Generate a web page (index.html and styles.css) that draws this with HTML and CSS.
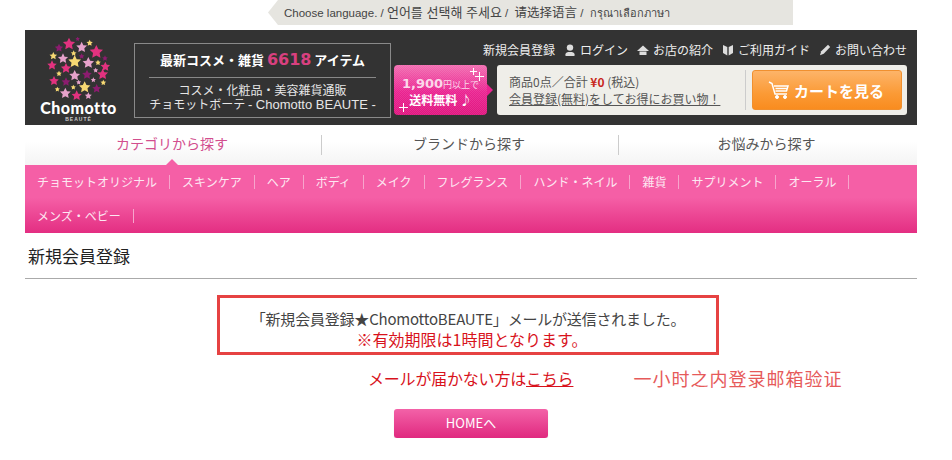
FILE: index.html
```html
<!DOCTYPE html>
<html lang="ja">
<head>
    <meta charset="UTF-8">
    <meta name="viewport" content="width=device-width, initial-scale=1.0">
    <title>新規会員登録 | Chomotto BEAUTE</title>
    <link rel="stylesheet" href="styles.css">
</head>
<body>
    <svg class="defs" width="0" height="0">
        <symbol id="star" viewBox="-10 -10 20 20" overflow="visible">
            <polygon points="0,-10 3,-3.800 9.500,-3.100 4.700,1.500 5.900,8.100 0,5 -5.900,8.100 -4.700,1.500 -9.500,-3.100 -3,-3.800"/>
        </symbol>
    </svg>

    <div class="lang-bar">
        <p class="lang-text">Choose language. / <span class="lang-ko" lang="ko">언어를 선택해 주세요</span> / <span class="lang-sc" lang="zh-CN">请选择语言</span> / <span class="lang-th" lang="th">กรุณาเลือกภาษา</span></p>
    </div>

    <div class="page">
        <header class="header">
            <a class="logo" href="#">
                <svg class="logo-stars" viewBox="0 0 300 210" width="100" height="70">
                    <g class="star-dark">
                        <use href="#star" x="74" y="41" width="26" height="26"/>
                        <use href="#star" x="146" y="70" width="18" height="18"/>
                        <use href="#star" x="216" y="76" width="18" height="18"/>
                        <use href="#star" x="156" y="119" width="30" height="30"/>
                        <use href="#star" x="94" y="142" width="28" height="28"/>
                        <use href="#star" x="186" y="162" width="28" height="28"/>
                        <use href="#star" x="136" y="20" width="14" height="14"/>
                    </g>
                    <g class="star-pink">
                        <use href="#star" x="98" y="23" width="38" height="38"/>
                        <use href="#star" x="178" y="45" width="42" height="42"/>
                        <use href="#star" x="211" y="95" width="30" height="30"/>
                        <use href="#star" x="51" y="91" width="30" height="30"/>
                        <use href="#star" x="92" y="99" width="32" height="32"/>
                        <use href="#star" x="201" y="116" width="34" height="34"/>
                        <use href="#star" x="57" y="138" width="30" height="30"/>
                        <use href="#star" x="124" y="181" width="32" height="32"/>
                    </g>
                    <g class="star-light">
                        <use href="#star" x="138" y="35" width="34" height="34"/>
                        <use href="#star" x="83" y="70" width="32" height="32"/>
                        <use href="#star" x="157" y="81" width="36" height="36"/>
                        <use href="#star" x="117" y="120" width="34" height="34"/>
                        <use href="#star" x="189" y="113" width="16" height="16"/>
                        <use href="#star" x="138" y="149" width="16" height="16"/>
                        <use href="#star" x="182" y="142" width="16" height="16"/>
                        <use href="#star" x="89" y="173" width="34" height="34"/>
                        <use href="#star" x="164" y="187" width="22" height="22"/>
                    </g>
                    <g class="star-yellow">
                        <use href="#star" x="169" y="29" width="20" height="20"/>
                        <use href="#star" x="58" y="66" width="24" height="24"/>
                        <use href="#star" x="122" y="61" width="18" height="18"/>
                        <use href="#star" x="114" y="75" width="40" height="40"/>
                        <use href="#star" x="195" y="89" width="18" height="18"/>
                        <use href="#star" x="78" y="122" width="18" height="18"/>
                        <use href="#star" x="211" y="149" width="18" height="18"/>
                        <use href="#star" x="146" y="154" width="36" height="36"/>
                        <use href="#star" x="122" y="164" width="16" height="16"/>
                        <use href="#star" x="74" y="170" width="16" height="16"/>
                    </g>
                </svg>
                <span class="logo-name">Chomotto</span>
                <span class="logo-sub">BEAUTÉ</span>
            </a>

            <div class="catch">
                <p class="catch-top">最新コスメ・雑貨 <strong class="catch-num">6618</strong> アイテム</p>
                <p class="catch-sub">コスメ・化粧品・美容雑貨通販</p>
                <p class="catch-sub">チョモットボーテ <span class="catch-en">- Chomotto BEAUTE -</span></p>
            </div>

            <div class="free-badge">
                <span class="spark spark-a"></span>
                <span class="spark spark-b"></span>
                <span class="spark spark-c"></span>
                <p class="free-price"><b>1,900</b>円以上で</p>
                <p class="free-label">送料無料 ♪</p>
            </div>

            <div class="header-right">
                <nav class="user-links">
                    <a href="#">新規会員登録</a>
                    <a href="#">
                        <svg class="link-icon" viewBox="0 0 12 12"><circle cx="6" cy="3.600" r="3.200"/><path d="M1.500 12V10.200C1.500 8.600 3.400 8 6 8s4.500.6 4.500 2.200V12z"/></svg>
                        ログイン
                    </a>
                    <a href="#">
                        <svg class="link-icon" viewBox="0 0 12 12"><path d="M6 1.500L12 7H0z"/><path d="M2.500 7.500h7V11h-7z"/></svg>
                        お店の紹介
                    </a>
                    <a href="#">
                        <svg class="link-icon" viewBox="0 0 12 12"><path d="M1 1l4.300 2v8.500L1 9z"/><path d="M11 1L6.700 3v8.500L11 9z"/></svg>
                        ご利用ガイド
                    </a>
                    <a href="#">
                        <svg class="link-icon" viewBox="0 0 12 12"><path d="M9 .8l2.200 2.200-6.500 6.700L1 11.300l1.200-4z"/></svg>
                        お問い合わせ
                    </a>
                </nav>
                <div class="cart-panel">
                    <div class="cart-info">
                        <p>商品0点／合計 <b class="cart-total">¥0</b> (税込)</p>
                        <a href="#">会員登録(無料)をしてお得にお買い物！</a>
                    </div>
                    <a class="cart-btn" href="#">
                        <svg class="cart-icon" viewBox="0 0 22 18"><path d="M1 1l3 1.500 3 10.500h12M6 5h14l-1.500 5H7.500M7.500 7.500h11.500" fill="none" stroke-width="1.500"/><circle cx="9" cy="16" r="1.500"/><circle cx="17" cy="16" r="1.500"/></svg>
                        カートを見る
                    </a>
                </div>
            </div>
        </header>

        <div class="tabs">
            <a class="tab active" href="#">カテゴリから探す</a>
            <a class="tab" href="#">ブランドから探す</a>
            <a class="tab" href="#">お悩みから探す</a>
        </div>

        <ul class="cat-nav">
            <li><a href="#">チョモットオリジナル</a></li>
            <li><a href="#">スキンケア</a></li>
            <li><a href="#">ヘア</a></li>
            <li><a href="#">ボディ</a></li>
            <li><a href="#">メイク</a></li>
            <li><a href="#">フレグランス</a></li>
            <li><a href="#">ハンド・ネイル</a></li>
            <li><a href="#">雑貨</a></li>
            <li><a href="#">サプリメント</a></li>
            <li><a href="#">オーラル</a></li>
            <li><a href="#">メンズ・ベビー</a></li>
        </ul>

        <h1 class="page-title">新規会員登録</h1>

        <div class="notice">
            <p>「新規会員登録★ChomottoBEAUTE」メールが送信されました。</p>
            <p class="notice-red">※有効期限は1時間となります。</p>
        </div>

        <div class="resend">
            <p class="resend-text">メールが届かない方は<a href="#">こちら</a></p>
            <p class="resend-note" lang="zh-CN">一小时之内登录邮箱验证</p>
        </div>

        <a class="home-btn" href="#">HOMEへ</a>
    </div>
</body>
</html>
```

FILE: styles.css
```css
* {
    box-sizing: border-box;
    margin: 0;
    padding: 0;
}

body {
    background-color: #fff;
    color: #444;
    font-family: "Noto Sans CJK JP", "Noto Sans", sans-serif;
    font-size: 12px;
    overflow: hidden;
}

a {
    color: inherit;
    text-decoration: none;
}

.defs {
    display: block;
    height: 0;
}

.lang-bar {
    width: 525px;
    height: 25px;
    margin-left: 268px;
    padding-left: 16px;
    background-color: #e6e5e0;
    clip-path: polygon(10px 0, 100% 0, 100% 100%, 10px 100%, 0 50%);
}

.lang-text {
    font-family: "Liberation Sans", "Noto Sans CJK JP", sans-serif;
    font-size: 11.5px;
    line-height: 24px;
    color: #444;
    white-space: nowrap;
}

.lang-ko {
    font-family: "Noto Sans CJK KR", sans-serif;
    font-size: 13px;
}

.lang-sc {
    margin-left: 3px;
    font-family: "Noto Sans CJK SC", sans-serif;
    font-size: 12.5px;
}

.lang-th {
    margin-left: 3px;
    font-family: "Noto Sans", "DejaVu Sans", sans-serif;
    font-size: 11px;
}

.page {
    width: 892px;
    margin: 5px 0 0 25px;
}

/* header */
.header {
    display: flex;
    height: 95px;
    background-color: #333;
}

.logo {
    display: block;
    flex: none;
    width: 100px;
    height: 95px;
    margin-left: 5px;
    padding-right: 3px;
}

.logo-stars {
    display: block;
}

.star-dark { fill: #8c1c6f; }
.star-pink { fill: #e2327f; }
.star-light { fill: #e6a2cb; }
.star-yellow { fill: #f6d873; }

.logo-name {
    display: block;
    font-family: "Lato", sans-serif;
    font-size: 16px;
    font-weight: 900;
    line-height: 16px;
    letter-spacing: 0.5px;
    text-align: center;
    color: #fff;
}

.logo-sub {
    display: block;
    font-family: "Liberation Sans", sans-serif;
    font-size: 5px;
    font-weight: bold;
    line-height: 6px;
    letter-spacing: 1px;
    text-align: center;
    color: #ccc;
}

.catch {
    flex: none;
    width: 257px;
    height: 75px;
    margin: 13px 0 0 4px;
    border: 1px solid #8a8a8a;
    text-align: center;
    color: #eee;
}

.catch-top {
    height: 34px;
    margin: 0 14px 5px;
    border-bottom: 1px solid #888;
    font-size: 13px;
    font-weight: bold;
    line-height: 32px;
    color: #fff;
}

.catch-num {
    font-family: "DejaVu Sans", sans-serif;
    font-size: 16px;
    color: #d8407f;
}

.catch-sub {
    height: 14px;
    font-size: 12px;
    line-height: 14px;
    color: #e6e6e6;
    white-space: nowrap;
}

.catch-en {
    font-family: "Liberation Sans", sans-serif;
    font-size: 13px;
}

.free-badge {
    position: relative;
    flex: none;
    width: 93px;
    height: 50px;
    margin: 35px 10px 0 3px;
    padding-top: 12px;
    border-radius: 4px;
    background: repeating-conic-gradient(rgba(255, 255, 255, 0.1) 0 25%, transparent 0 50%) 0 0 / 2px 2px,
        linear-gradient(#f26db1, #ea2290 55%, #e0157f);
    text-align: center;
    color: #fff;
}

.free-badge:after {
    content: '';
    position: absolute;
    top: 19px;
    right: -6px;
    border-left: 6px solid #ea2290;
    border-top: 6px solid transparent;
    border-bottom: 6px solid transparent;
}

.free-price {
    font-size: 9px;
    line-height: 14px;
    color: #fbd8ea;
    white-space: nowrap;
}

.free-price b {
    font-family: "DejaVu Sans", sans-serif;
    font-size: 13px;
}

.free-label {
    font-size: 12px;
    font-weight: bold;
    line-height: 16px;
}

.spark {
    position: absolute;
    width: 7px;
    height: 7px;
    background: linear-gradient(#fff, #fff) center / 100% 1px no-repeat,
        linear-gradient(#fff, #fff) center / 1px 100% no-repeat;
}

.spark-a { top: 3px; right: 10px; }
.spark-b { top: 7px; right: 3px; width: 9px; height: 9px; }
.spark-c { bottom: 3px; left: 5px; width: 9px; height: 9px; }

.header-right {
    flex: none;
    width: 410px;
}

.user-links {
    display: flex;
    justify-content: flex-end;
    gap: 9px;
    height: 35px;
    padding-top: 5px;
    line-height: 18px;
    color: #eee;
    white-space: nowrap;
}

.user-links a {
    display: flex;
    align-items: center;
    gap: 4px;
}

.link-icon {
    width: 12px;
    height: 12px;
    fill: #ddd;
}

.cart-panel {
    display: flex;
    height: 50px;
    padding: 5px;
    border-radius: 3px;
    background-color: #efeee9;
}

.cart-info {
    width: 244px;
    padding: 3px 0 0 7px;
    border-right: 1px solid #ccc;
    line-height: 17px;
    color: #555;
    white-space: nowrap;
}

.cart-info a {
    text-decoration: underline;
}

.cart-total {
    color: #c8281e;
}

.cart-btn {
    display: flex;
    align-items: center;
    justify-content: center;
    gap: 4px;
    width: 150px;
    height: 40px;
    margin-left: 6px;
    padding-right: 2px;
    border: 1px solid #f0902f;
    border-radius: 3px;
    background: linear-gradient(#fdb469, #fb9a35 60%, #f98c1f);
    font-size: 15px;
    font-weight: bold;
    color: #fff;
    white-space: nowrap;
}

.cart-icon {
    width: 22px;
    height: 18px;
    fill: #fff;
    stroke: #fff;
}

/* tabs */
.tabs {
    display: flex;
    height: 40px;
    background: linear-gradient(#fff 40%, #f4f4f4);
}

.tab {
    position: relative;
    flex: none;
    width: 297px;
    padding-right: 3px;
    font-size: 14px;
    line-height: 36px;
    text-align: center;
    color: #555;
}

.tab:last-child {
    flex: 1;
}

.tab:not(:last-child):after {
    content: '';
    position: absolute;
    top: 10px;
    right: 0;
    height: 20px;
    border-right: 1px solid #ccc;
}

.tab.active {
    color: #d24e8e;
}

.tab.active:before {
    content: '';
    position: absolute;
    bottom: 0;
    left: 141px;
    border-bottom: 6px solid #f55fa6;
    border-left: 6px solid transparent;
    border-right: 6px solid transparent;
}

/* categories */
.cat-nav {
    display: flex;
    flex-wrap: wrap;
    height: 68px;
    padding-left: 12px;
    list-style: none;
    background: linear-gradient(#f55fa6 48%, #e32e82);
}

.cat-nav li {
    height: 14px;
    margin: 10px 12px 10px 0;
    padding-right: 12px;
    border-right: 1px solid #f7a5cc;
    line-height: 14px;
    color: #fde8f2;
    white-space: nowrap;
}

/* content */
.page-title {
    height: 46px;
    padding-left: 3px;
    border-bottom: 1px solid #aaa;
    font-size: 17px;
    font-weight: normal;
    line-height: 46px;
    color: #222;
}

.notice {
    width: 502px;
    height: 60px;
    margin: 16px 0 0 192px;
    padding-top: 11px;
    border: 3px solid #e64242;
    font-size: 15px;
    line-height: 20px;
    letter-spacing: -0.2px;
    text-align: center;
    color: #444;
}

.notice-red {
    padding-left: 8px;
    font-size: 16px;
    letter-spacing: 0;
    color: #d8121c;
}

.resend {
    display: flex;
    gap: 60px;
    padding: 11px 0 0 343px;
    font-size: 16px;
    line-height: 24px;
    color: #d8121c;
    white-space: nowrap;
}

.resend-text {
    letter-spacing: -0.2px;
}

.resend-text a {
    text-decoration: underline;
}

.resend-note {
    font-family: "Noto Sans CJK SC", sans-serif;
    font-size: 18px;
    letter-spacing: 1px;
    color: #e65a5a;
}

.home-btn {
    display: block;
    width: 154px;
    height: 29px;
    margin: 19px 0 0 369px;
    border-radius: 3px;
    background: linear-gradient(#f362a8, #e0297f);
    box-shadow: 0 1px 1px rgba(0, 0, 0, 0.15);
    font-size: 13px;
    line-height: 27px;
    text-align: center;
    color: #fff;
}
```
